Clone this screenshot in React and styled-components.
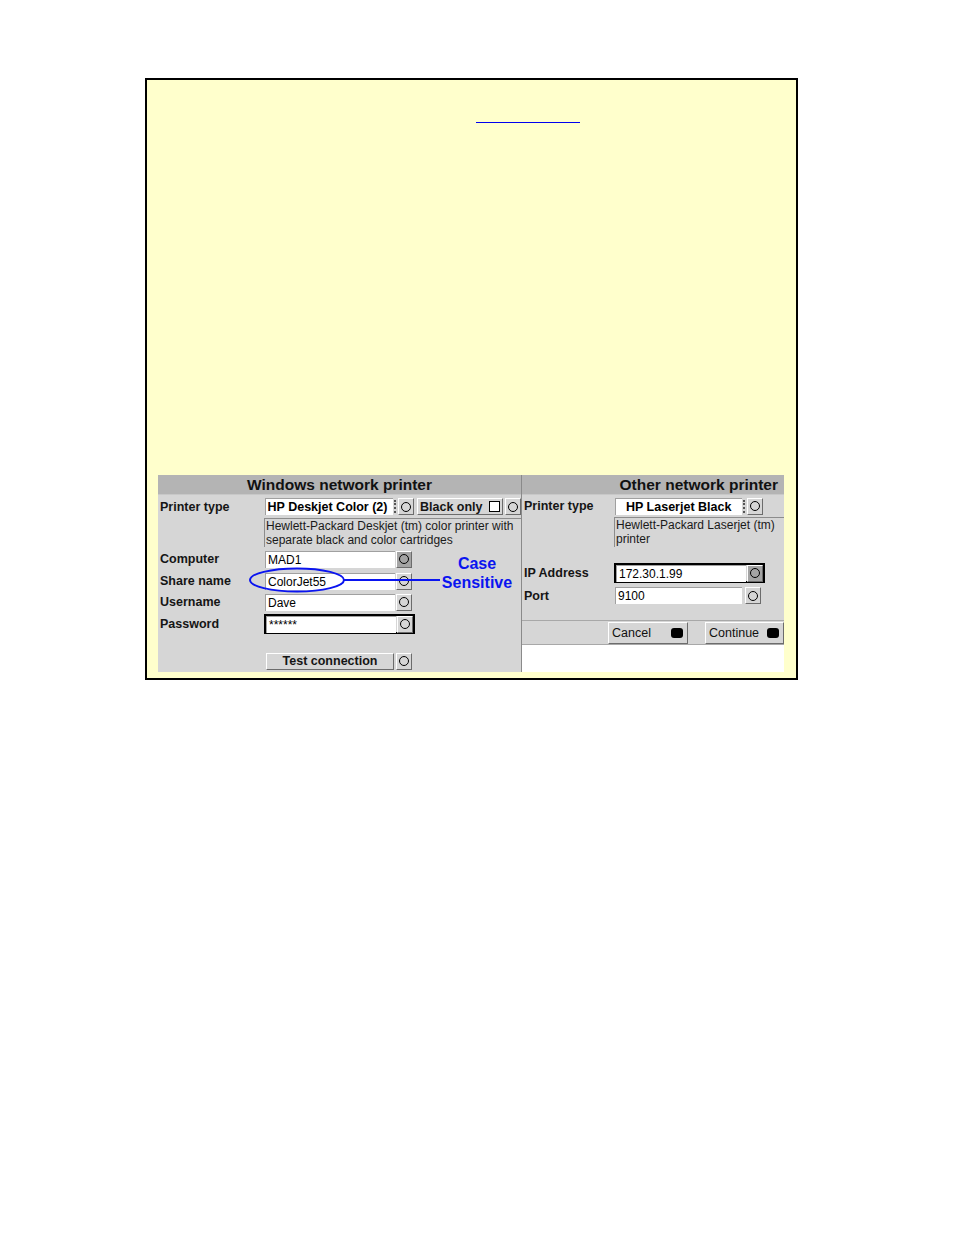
import React from 'react';
import styled, { createGlobalStyle } from 'styled-components';

const Global = createGlobalStyle`
  html, body { margin: 0; padding: 0; background: #fff; }
  body { font-family: "Liberation Sans", Arial, sans-serif; }
`;

const Page = styled.div`
  padding: 78px 0 0 145px;
  height: 1235px;
  box-sizing: border-box;
`;

const Frame = styled.div`
  width: 653px;
  height: 602px;
  box-sizing: border-box;
  border: 2px solid #000;
  background: #ffffcc;
  padding: 0 0 0 11px;
`;

const LinkLine = styled.a`
  display: block;
  width: 104px;
  height: 1px;
  margin: 42px 0 0 318px;
  background: #0000ee;
`;

const Panels = styled.div`
  display: flex;
  align-items: flex-start;
  margin-top: 352px;
`;

const Panel = styled.div`
  position: relative;
  width: ${p => p.$w}px;
  height: 197px;
  background: #d6d6d6;
  box-sizing: border-box;
  border-left: ${p => (p.$divider ? '1px solid #8a8a8a' : 'none')};
  display: flex;
  flex-direction: column;
`;

const Header = styled.div`
  height: 19px;
  background: #b4b4b4;
  font-weight: bold;
  font-size: 15.5px;
  line-height: 19px;
  color: #111;
  text-align: ${p => p.$align || 'center'};
  padding-right: ${p => (p.$align === 'right' ? '6px' : '0')};
  border-bottom: 1px solid #c8c8c8;
`;

const Row = styled.div`
  display: flex;
  align-items: center;
  height: ${p => p.$h || 18}px;
  margin-top: ${p => p.$mt || 0}px;
`;

const Label = styled.div`
  width: ${p => p.$w}px;
  padding-left: ${p => p.$pl || 2}px;
  box-sizing: border-box;
  font-size: 12.5px;
  font-weight: bold;
  color: #151515;
  white-space: nowrap;
`;

const Field = styled.div`
  width: ${p => p.$w}px;
  height: 17px;
  box-sizing: border-box;
  background: #fff;
  border-top: 1px solid #a0a0a0;
  border-left: 1px solid #a0a0a0;
  font-size: ${p => (p.$bold ? 12.5 : 12)}px;
  font-weight: ${p => (p.$bold ? 'bold' : 'normal')};
  line-height: 16px;
  padding-left: ${p => p.$pl || 2}px;
  color: #000;
  white-space: nowrap;
  overflow: hidden;
`;

const Dots = styled.div`
  width: 1px;
  height: 13px;
  margin: 0 1px;
  border-left: 2px dotted #555;
`;

const RoundBtn = styled.div`
  width: 16px;
  height: 17px;
  box-sizing: border-box;
  margin-left: ${p => p.$ml || 0}px;
  background: ${p => (p.$pressed ? '#a4a4a4' : '#d6d6d6')};
  border-top: 1px solid #fff;
  border-left: 1px solid #fff;
  border-bottom: 1px solid #6c6c6c;
  border-right: 1px solid #6c6c6c;
  display: flex;
  align-items: center;
  justify-content: center;
  flex-shrink: 0;
  &::after {
    content: '';
    width: 10px;
    height: 10px;
    box-sizing: border-box;
    border: 1.5px solid #000;
    border-radius: 50%;
  }
`;

const Framed = styled.div`
  display: flex;
  align-items: center;
  height: 20px;
  box-sizing: border-box;
  border: 2px solid #000;
  margin-left: ${p => p.$ml || 0}px;
`;

const Toggle = styled.div`
  display: flex;
  align-items: center;
  width: 86px;
  height: 17px;
  box-sizing: border-box;
  margin-left: 3px;
  padding-left: 2px;
  border-top: 1px solid #fff;
  border-left: 1px solid #fff;
  border-bottom: 1px solid #6c6c6c;
  border-right: 1px solid #6c6c6c;
  font-size: 12.5px;
  font-weight: bold;
  color: #151515;
  white-space: nowrap;
  flex-shrink: 0;
`;

const Check = styled.span`
  width: 11px;
  height: 11px;
  box-sizing: border-box;
  margin-left: 6px;
  background: #fff;
  border: 1px solid #000;
  flex-shrink: 0;
`;

const Desc = styled.div`
  margin: 2px 0 0 ${p => p.$ml}px;
  width: ${p => p.$w}px;
  height: ${p => p.$h}px;
  box-sizing: border-box;
  border-top: 1px solid #8c8c8c;
  border-left: 1px solid #8c8c8c;
  font-size: 12px;
  line-height: 14px;
  color: #1a1a1a;
  padding: 0 0 0 1px;
  overflow: hidden;
  white-space: nowrap;
`;

const WideBtn = styled.div`
  width: 128px;
  height: 17px;
  box-sizing: border-box;
  margin-left: 108px;
  border-top: 1px solid #fff;
  border-left: 1px solid #fff;
  border-bottom: 1px solid #6c6c6c;
  border-right: 1px solid #6c6c6c;
  font-size: 12.5px;
  font-weight: bold;
  text-align: center;
  line-height: 15px;
  color: #151515;
`;

const ButtonBar = styled.div`
  display: flex;
  align-items: center;
  height: 25px;
  box-sizing: border-box;
  border-top: 1px solid #a8a8a8;
  border-bottom: 1px solid #a8a8a8;
  margin-top: ${p => p.$mt}px;
`;

const ActionBtn = styled.div`
  display: flex;
  align-items: center;
  justify-content: space-between;
  width: ${p => p.$w}px;
  height: 22px;
  box-sizing: border-box;
  margin-left: ${p => p.$ml}px;
  padding: 0 4px 0 3px;
  border-top: 1px solid #fff;
  border-left: 1px solid #fff;
  border-bottom: 1px solid #6c6c6c;
  border-right: 1px solid #6c6c6c;
  font-size: 12.5px;
  color: #111;
  &::after {
    content: '';
    width: 12px;
    height: 10px;
    background: #000;
    border-radius: 3px;
  }
`;

const WhiteFill = styled.div`
  flex: 1;
  background: #fff;
`;

const Note = styled.div`
  position: absolute;
  left: 280px;
  top: 79px;
  width: 78px;
  text-align: center;
  color: #0a14f0;
  font-weight: bold;
  font-size: 16px;
  line-height: 19px;
`;

const Mark = styled.svg`
  position: absolute;
  left: 90px;
  top: 91px;
  overflow: visible;
`;

export default function App() {
  return (
    <Page>
      <Global />
      <Frame>
        <LinkLine href="#" />
        <Panels>
          <Panel $w={363}>
            <Header>Windows network printer</Header>
            <Row $mt={2} $h={19}>
              <Label $w={107}>Printer type</Label>
              <Field $w={129} $bold>HP Deskjet Color (2)</Field>
              <Dots />
              <RoundBtn />
              <Toggle>
                Black only
                <Check />
              </Toggle>
              <RoundBtn $ml={2} />
            </Row>
            <Desc $ml={106} $w={257} $h={29}>
              Hewlett-Packard Deskjet (tm) color printer with
              <br />
              separate black and color cartridges
            </Desc>
            <Row $mt={3}>
              <Label $w={107}>Computer</Label>
              <Field $w={130}>MAD1</Field>
              <RoundBtn $ml={1} $pressed />
            </Row>
            <Row $mt={4}>
              <Label $w={107}>Share name</Label>
              <Field $w={130}>ColorJet55</Field>
              <RoundBtn $ml={1} />
            </Row>
            <Row $mt={3}>
              <Label $w={107}>Username</Label>
              <Field $w={130}>Dave</Field>
              <RoundBtn $ml={1} />
            </Row>
            <Row $mt={3} $h={20}>
              <Label $w={106}>Password</Label>
              <Framed>
                <Field $w={130}>******</Field>
                <RoundBtn $ml={1} />
              </Framed>
            </Row>
            <Row $mt={18}>
              <WideBtn>Test connection</WideBtn>
              <RoundBtn $ml={2} />
            </Row>
            <Mark width="192" height="28">
              <ellipse cx="49" cy="14" rx="47" ry="11.5" fill="none" stroke="#0a14f0" strokeWidth="2" />
              <line x1="96" y1="14" x2="192" y2="14" stroke="#0a14f0" strokeWidth="2" />
            </Mark>
            <Note>
              Case
              <br />
              Sensitive
            </Note>
          </Panel>
          <Panel $w={263} $divider>
            <Header $align="right">Other network printer</Header>
            <Row $mt={2}>
              <Label $w={93} $pl={2}>Printer type</Label>
              <Field $w={127} $bold $pl={10}>HP Laserjet Black</Field>
              <Dots />
              <RoundBtn />
            </Row>
            <Desc $ml={92} $w={170} $h={30}>
              Hewlett-Packard Laserjet (tm)
              <br />
              printer
            </Desc>
            <Row $mt={16} $h={20}>
              <Label $w={92} $pl={2}>IP Address</Label>
              <Framed>
                <Field $w={130}>172.30.1.99</Field>
                <RoundBtn $ml={1} $pressed />
              </Framed>
            </Row>
            <Row $mt={4} $h={17}>
              <Label $w={93} $pl={2}>Port</Label>
              <Field $w={127}>9100</Field>
              <RoundBtn $ml={3} />
            </Row>
            <ButtonBar $mt={16}>
              <ActionBtn $w={80} $ml={86}>Cancel</ActionBtn>
              <ActionBtn $w={79} $ml={17}>Continue</ActionBtn>
            </ButtonBar>
            <WhiteFill />
          </Panel>
        </Panels>
      </Frame>
    </Page>
  );
}
